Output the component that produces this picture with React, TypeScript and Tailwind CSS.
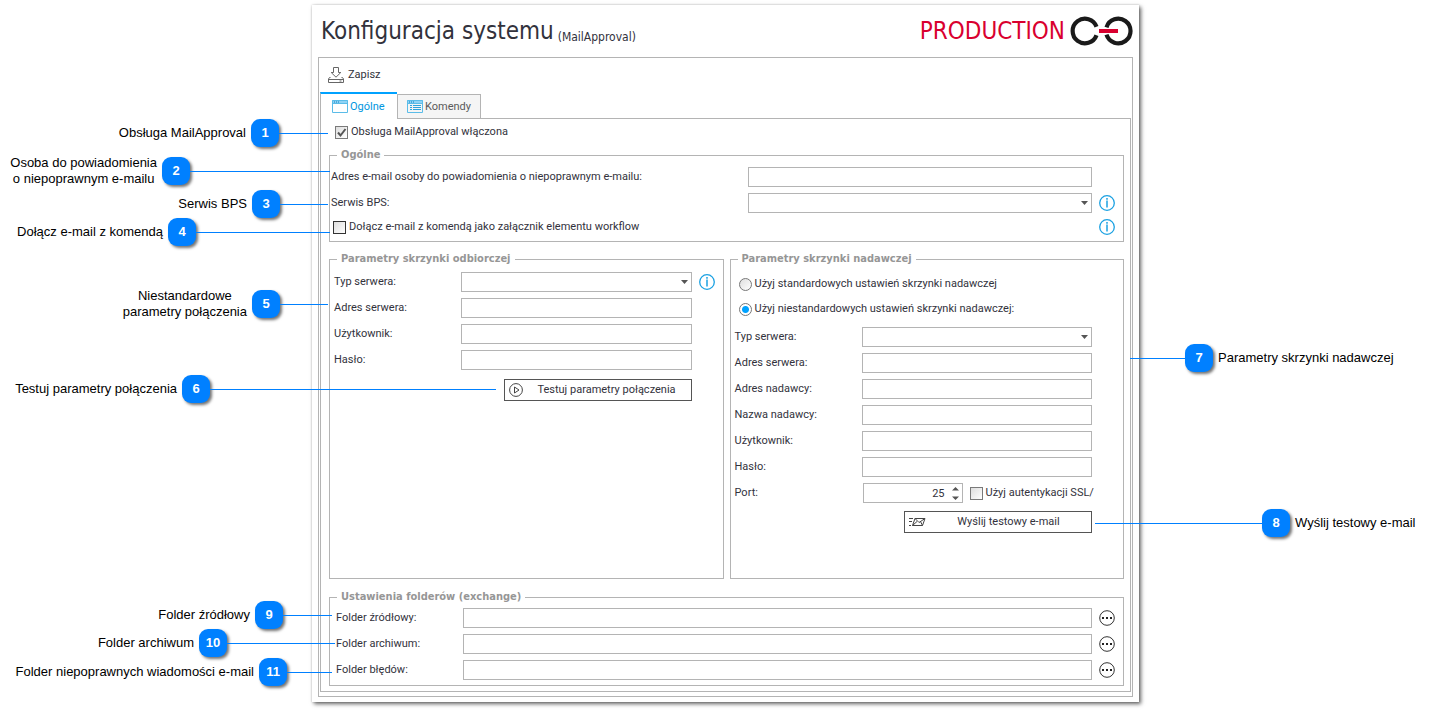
import { ReactNode, useId, useState } from "react";
import clsx from "clsx";

type CalloutProps = {
  n: number;
  text: string;
  side?: "left" | "right";
  className?: string;
  line: string;
};

function Callout({ n, text, side = "left", className, line }: CalloutProps) {
  return (
    <li
      className={clsx(
        "flex h-7 items-center",
        side === "left" ? "justify-end" : "flex-row-reverse justify-end",
        className
      )}
    >
      <span className="text-center text-[13px] leading-4 whitespace-pre text-black">{text}</span>
      <span
        className={clsx(
          "flex size-7 shrink-0 items-center justify-center rounded-[9px] bg-[#0080ff] text-[13px] font-bold text-white shadow-[2px_2px_3px_rgba(0,0,0,0.55)]",
          side === "left" ? "ml-[5px]" : "mr-[5px]"
        )}
      >
        {n}
      </span>
      <span className={clsx("h-px shrink-0 bg-[#0080ff]", line)} />
    </li>
  );
}

function Logo() {
  return (
    <svg width="63" height="30" viewBox="0 0 63 30" fill="none" aria-hidden="true">
      <path d="M26.5 10.800A12.3 12.3 0 1 0 26.5 19.200" stroke="#1a1a1a" strokeWidth="4.200" />
      <path d="M36.500 11.300A12.3 12.3 0 1 1 36.500 18.700" stroke="#1a1a1a" strokeWidth="4.200" />
      <path d="M29 15H48" stroke="#d9002f" strokeWidth="4" />
    </svg>
  );
}

function SaveIcon() {
  return (
    <svg width="16" height="16" viewBox="0 0 16 16" fill="none" stroke="#666" aria-hidden="true">
      <path d="M5.5 .5h5v5h2.3L8 10.2 3.2 5.500h2.300z" />
      <path d="M2.500 10.500H1.500L.5 12v3.500h15V12l-1-1.500h-1M.5 12.500h15M11.500 14h2" />
    </svg>
  );
}

function WindowIcon({ list = false }: { list?: boolean }) {
  return (
    <svg width="16" height="13" viewBox="0 0 16 13" fill="none" aria-hidden="true">
      <path d="M0 0h16v4H0z" fill="#8fd3f5" />
      <path d="M.5 .5h15v12H.5zM.5 3.500h15" stroke="#5bbce8" />
      <path d="M2 2h1M4 2h1M6 2h1" stroke="#0b7fc0" />
      {list && <path d="M3 5.500h2M6 5.500h8M3 7.500h2M6 7.500h8M3 9.500h2M6 9.500h8" stroke="#2ea3dc" />}
    </svg>
  );
}

function InfoIcon() {
  return (
    <svg className="shrink-0" width="16" height="16" viewBox="0 0 16 16" fill="none" aria-hidden="true">
      <circle cx="8" cy="8" r="7.300" stroke="#1ba1e2" strokeWidth="1.300" />
      <path d="M8 5.500v7M8 3v1.700" stroke="#1ba1e2" strokeWidth="1.500" />
    </svg>
  );
}

function Group({ title, className, body, children }: { title: string; className?: string; body: string; children: ReactNode }) {
  return (
    <fieldset className={clsx("min-w-0 border border-[#b4b4b4]", className)}>
      <legend className="ml-[7px] h-4 px-1 text-[11px] leading-4 font-bold text-[#969696] font-['DejaVu_Sans_Condensed','DejaVu_Sans',sans-serif]">
        {title}
      </legend>
      <div className={clsx("pr-2", body)}>{children}</div>
    </fieldset>
  );
}

type FieldProps = {
  label: string;
  kind?: "text" | "password" | "select";
  labelWidth?: string;
  after?: ReactNode;
};

function Field({ label, kind = "text", labelWidth = "w-[127px]", after }: FieldProps) {
  const id = useId();
  const box = "h-5 w-full appearance-none border border-[#b4b4b4] bg-white px-1 outline-none";
  return (
    <div className="flex h-5 items-center gap-[7px]">
      <div className="flex min-w-0 flex-1 items-center">
        <label htmlFor={id} className={clsx("shrink-0", labelWidth)}>
          {label}
        </label>
        <div className="relative flex-1">
          {kind === "select" ? (
            <>
              <select id={id} className={box}>
                <option value=""></option>
              </select>
              <svg className="pointer-events-none absolute top-2 right-1" width="7" height="4" viewBox="0 0 7 4" aria-hidden="true">
                <path d="M0 0h7L3.500 4z" fill="#555" />
              </svg>
            </>
          ) : (
            <input id={id} type={kind} className={box} />
          )}
        </div>
      </div>
      {after ?? <span className="w-4 shrink-0" />}
    </div>
  );
}

function Checkbox({ label, defaultChecked = false, dark = false, className }: { label: string; defaultChecked?: boolean; dark?: boolean; className?: string }) {
  const [checked, setChecked] = useState(defaultChecked);
  return (
    <label className={clsx("flex items-center whitespace-nowrap", className)}>
      <span className="relative mr-[3px] flex shrink-0">
        <input
          type="checkbox"
          checked={checked}
          onChange={(e) => setChecked(e.target.checked)}
          className={clsx(
            "size-[13px] appearance-none border bg-linear-to-br from-[#dedede] to-white",
            dark ? "border-[#333]" : "border-[#7a7a7a]"
          )}
        />
        {checked && (
          <svg className="pointer-events-none absolute inset-0" width="13" height="13" viewBox="0 0 13 13" fill="none" aria-hidden="true">
            <path d="M3 6.500l2.500 3L10.500 3" stroke="#555" strokeWidth="2" />
          </svg>
        )}
      </span>
      {label}
    </label>
  );
}

function Radio({ label, defaultChecked }: { label: string; defaultChecked?: boolean }) {
  return (
    <label className="flex h-5 items-center pl-1">
      <input
        type="radio"
        name="outgoing"
        defaultChecked={defaultChecked}
        className="mr-[3px] size-[13px] appearance-none rounded-full border border-[#777] bg-linear-to-br from-[#dedede] to-white checked:bg-[radial-gradient(circle,#00a2ff_0_3px,#ffffff_4px)]"
      />
      {label}
    </label>
  );
}

function MoreButton({ label }: { label: string }) {
  return (
    <button type="button" aria-label={label} className="shrink-0">
      <svg width="16" height="16" viewBox="0 0 16 16" fill="none" aria-hidden="true">
        <circle cx="8" cy="8" r="7.300" stroke="#333" />
        <path d="M3 7h2v2H3zM7 7h2v2H7zM11 7h2v2h-2z" fill="#222" />
      </svg>
    </button>
  );
}

function ActionButton({ icon, children, className }: { icon: ReactNode; children: ReactNode; className?: string }) {
  return (
    <button
      type="button"
      className={clsx("mr-[23px] flex h-[22px] w-[188px] items-center self-end border border-[#555] bg-white pl-1", className)}
    >
      {icon}
      <span className="flex-1 text-center">{children}</span>
    </button>
  );
}

const folders = ["Folder źródłowy:", "Folder archiwum:", "Folder błędów:"];

export default function App() {
  return (
    <div className="flex min-h-screen overflow-hidden bg-white font-['Liberation_Sans',Arial,sans-serif]">
      <ol className="z-10 w-[312px] shrink-0 pt-[119px]">
        <Callout n={1} text="Obsługa MailApproval" line="w-[49px]" className="-mr-4" />
        <Callout n={2} text={"Osoba do powiadomienia\no niepoprawnym e-mailu"} line="w-[140px]" className="mt-2.5 -mr-[18px]" />
        <Callout n={3} text="Serwis BPS" line="w-12" className="mt-[5px] -mr-4" />
        <Callout n={4} text="Dołącz e-mail z komendą" line="w-[134px]" className="-mr-[18px]" />
        <Callout n={5} text={"Niestandardowe\nparametry połączenia"} line="w-12" className="mt-11 -mr-4" />
        <Callout n={6} text="Testuj parametry połączenia" line="w-[286px]" className="mt-[57px] -mr-[184px]" />
        <Callout n={9} text="Folder źródłowy" line="w-[49px]" className="mt-[198px] -mr-5" />
        <Callout n={10} text="Folder archiwum" line="w-[108px]" className="-mr-[23px]" />
        <Callout n={11} text="Folder niepoprawnych wiadomości e-mail" line="w-[45px]" className="mt-px -mr-5" />
      </ol>

      <main className="mt-[5px] mb-[9px] flex min-w-0 flex-1 flex-col bg-white px-1.5 pb-[5px] font-[Roboto,sans-serif] text-[11px] leading-4 text-[#32323c] shadow-[2px_2px_4px_rgba(0,0,0,0.6),0_0_2px_rgba(0,0,0,0.2)]">
        <header className="flex h-[52px] items-center justify-between pl-[3px] font-['DejaVu_Sans_Condensed','DejaVu_Sans',sans-serif]">
          <h1 className="flex items-end gap-1 text-2xl">
            Konfiguracja systemu <small className="text-xs leading-5">(MailApproval)</small>
          </h1>
          <div className="flex items-center gap-[5px] text-2xl text-[#d9002f]">
            PRODUCTION
            <Logo />
          </div>
        </header>

        <div className="flex flex-1 flex-col border border-[#b4b4b4] px-px pb-1">
          <div className="flex h-[34px] items-center px-2">
            <button type="button" className="flex items-center gap-1">
              <SaveIcon />
              Zapisz
            </button>
          </div>

          <div role="tablist" className="z-[1] -mb-px flex items-end">
            <button type="button" role="tab" aria-selected="true" className="flex h-[27px] w-[77px] items-center gap-0.5 border-t-2 border-l border-t-[#00a2ff] border-l-[#b4b4b4] bg-white pl-[11px] text-[#0096e0]">
              <WindowIcon />
              Ogólne
            </button>
            <button type="button" role="tab" aria-selected="false" className="flex h-[25px] w-[84px] items-center gap-0.5 border border-[#b4b4b4] bg-[#f5f5f5] pl-[9px] text-[#5a5a5a]">
              <WindowIcon list />
              Komendy
            </button>
          </div>

          <div role="tabpanel" className="flex flex-1 flex-col border border-[#b4b4b4] pr-1.5 pb-[5px] pl-2">
            <Checkbox label="Obsługa MailApproval włączona" defaultChecked className="mt-[5px] h-4 pl-1.5" />

            <Group title="Ogólne" className="mt-[7px]" body="flex flex-col gap-1.5 pt-1 pb-1.5 pl-px">
              <Field label="Adres e-mail osoby do powiadomienia o niepoprawnym e-mailu:" labelWidth="w-[417px]" />
              <Field label="Serwis BPS:" kind="select" labelWidth="w-[417px]" after={<InfoIcon />} />
              <div className="flex h-4 items-center justify-between pl-0.5">
                <Checkbox label="Dołącz e-mail z komendą jako załącznik elementu workflow" dark />
                <InfoIcon />
              </div>
            </Group>

            <div className="mt-[9px] flex flex-1 gap-1.5">
              <Group title="Parametry skrzynki odbiorczej" className="flex-1" body="flex flex-col gap-1.5 pt-[5px] pl-1">
                <Field label="Typ serwera:" kind="select" after={<InfoIcon />} />
                <Field label="Adres serwera:" />
                <Field label="Użytkownik:" />
                <Field label="Hasło:" kind="password" />
                <ActionButton
                  className="mt-[3px]"
                  icon={
                    <svg width="14" height="14" viewBox="0 0 14 14" fill="none" stroke="#444" aria-hidden="true">
                      <circle cx="7" cy="7" r="6.400" />
                      <path d="M5.500 4v6l4.500-3z" />
                    </svg>
                  }
                >
                  Testuj parametry połączenia
                </ActionButton>
              </Group>

              <Group title="Parametry skrzynki nadawczej" className="flex-1" body="flex flex-col gap-2 pt-[7px] pl-1">
                <div className="flex flex-col gap-[5px]">
                  <Radio label="Użyj standardowych ustawień skrzynki nadawczej" />
                  <Radio label="Użyj niestandardowych ustawień skrzynki nadawczej:" defaultChecked />
                </div>
                <div className="flex flex-col gap-1.5">
                  <Field label="Typ serwera:" kind="select" />
                  <Field label="Adres serwera:" />
                  <Field label="Adres nadawcy:" />
                  <Field label="Nazwa nadawcy:" />
                  <Field label="Użytkownik:" />
                  <Field label="Hasło:" kind="password" />
                  <div className="mr-[22px] flex h-5 items-center">
                    <label htmlFor="port" className="w-32 shrink-0">
                      Port:
                    </label>
                    <div className="relative mr-[7px] w-[100px] shrink-0">
                      <input id="port" type="text" inputMode="numeric" defaultValue="25" className="h-5 w-full border border-[#b4b4b4] pr-[17px] text-right outline-none" />
                      <svg className="pointer-events-none absolute top-1 right-1" width="7" height="13" viewBox="0 0 7 13" fill="#555" aria-hidden="true">
                        <path d="M0 3.500h7L3.500 0zM0 9.500h7L3.500 13z" />
                      </svg>
                    </div>
                    <Checkbox label="Użyj autentykacji SSL/" />
                  </div>
                  <ActionButton
                    className="mt-0.5"
                    icon={
                      <svg width="17" height="10" viewBox="0 0 17 10" fill="none" stroke="#444" aria-hidden="true">
                        <path d="M6 1.500h10L13.500 8.500H3.500zM6 1.500l4 4 6-4M3.500 8.500L8 4.500M13.500 8.500l-2-4M0 1.500h4M0 4.500h3M0 8.500h2" />
                      </svg>
                    }
                  >
                    Wyślij testowy e-mail
                  </ActionButton>
                </div>
              </Group>
            </div>

            <Group title="Ustawienia folderów (exchange)" className="mt-2.5" body="flex flex-col gap-1.5 pt-[3px] pb-[5px] pl-1.5">
              {folders.map((f) => (
                <Field key={f} label={f} after={<MoreButton label={f} />} />
              ))}
            </Group>
          </div>
        </div>
      </main>

      <ol className="z-10 w-[296px] shrink-0 pt-[344px]">
        <Callout side="right" n={7} text="Parametry skrzynki nadawczej" line="w-[55px]" className="-ml-[9px]" />
        <Callout side="right" n={8} text="Wyślij testowy e-mail" line="w-[167px]" className="mt-[137px] -ml-11" />
      </ol>
    </div>
  );
}
